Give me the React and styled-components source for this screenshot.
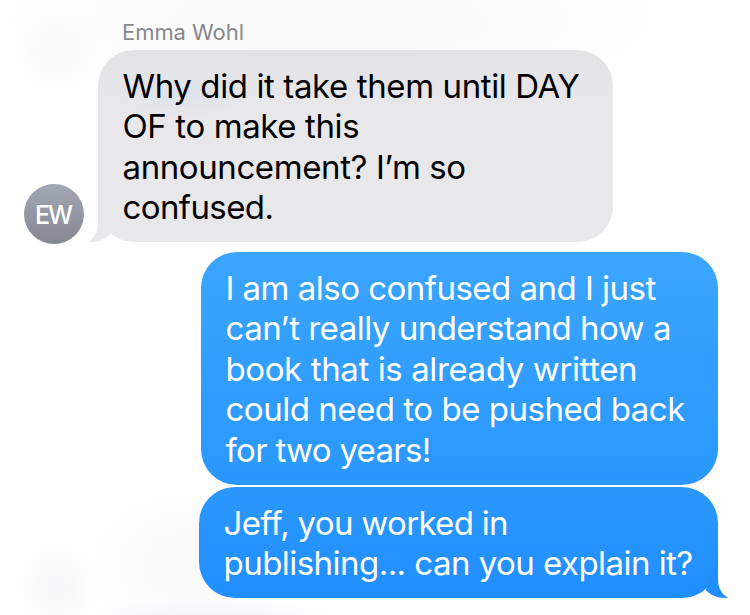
import React from "react";
import styled, { createGlobalStyle } from "styled-components";

// track: letter spacing of the line, in px
const incoming = [
  { text: "Why did it take them until DAY", track: -0.39 },
  { text: "OF to make this", track: -0.39 },
  { text: "announcement? I’m so", track: -0.4 },
  { text: "confused.", track: -0.6 },
];

const first = [
  { text: "I am also confused and I just", track: -0.52 },
  { text: "can’t really understand how a", track: -0.5 },
  { text: "book that is already written", track: -0.39 },
  { text: "could need to be pushed back", track: -0.48 },
  { text: "for two years!", track: -0.7 },
];

const second = [
  { text: "Jeff, you worked in", track: -0.68 },
  { text: "publishing... can you explain it?", track: -0.54 },
];

const Lines = ({ lines }) =>
  lines.map(({ text, track }) => (
    <Line key={text} $track={track}>
      {text}
    </Line>
  ));

const Tail = ({ flip, color }) => (
  <TailSvg $flip={flip} viewBox="0 0 24 40">
    <path
      fill={color}
      d="M13 0V22C13 30 17 37 23.5 39.6C15 41 6 38 .8 32Z"
    />
  </TailSvg>
);

const App = () => {
  return (
    <Page>
      <GlobalStyle />
      <Sender>Emma Wohl</Sender>
      <IncomingRow>
        <Avatar>EW</Avatar>
        <Received>
          <Lines lines={incoming} />
          <Tail flip color="#e8e8ea" />
        </Received>
      </IncomingRow>
      <Sent $width={517} $height={233} $from="#3ba5fe" $to="#2997fd">
        <Lines lines={first} />
      </Sent>
      <Sent $width={519} $height={111} $from="#2b98fd" $to="#208eff">
        <Lines lines={second} />
        <Tail color="#208eff" />
      </Sent>
    </Page>
  );
};

export default App;

const GlobalStyle = createGlobalStyle`
  body {
    margin: 0;
    background: #fefefe;
  }
`;

const Page = styled.main`
  box-sizing: border-box;
  display: flex;
  flex-direction: column;
  width: 750px;
  height: 615px;
  padding: 18px 32px 0 24px;
  overflow: hidden;
  font-family: Inter, "Liberation Sans", sans-serif;
  background:
    radial-gradient(ellipse 42px 45px at 56px 52px, #f9f9fa, transparent),
    radial-gradient(ellipse 42px 45px at 58px 586px, #f7f7f9, transparent),
    radial-gradient(ellipse 130px 20px at 210px 618px, #f0f5fb, transparent),
    radial-gradient(ellipse 110px 80px at 190px 565px, #f9f9fa, transparent),
    radial-gradient(ellipse 360px 90px at 330px 20px, #f9f9f9, transparent),
    #fefefe;
`;

const Sender = styled.p`
  margin: 0 0 4px 98px;
  align-self: flex-start;
  font-size: 22px;
  line-height: 28px;
  letter-spacing: -0.05px;
  color: #88888a;
`;

const IncomingRow = styled.div`
  display: flex;
  align-items: flex-end;
  gap: 14px;
  margin-bottom: 10px;
`;

const Avatar = styled.div`
  box-sizing: border-box;
  display: flex;
  align-items: center;
  justify-content: center;
  width: 60px;
  height: 60px;
  margin-bottom: -2px;
  padding: 2px 2px 0 0;
  border-radius: 50%;
  background: linear-gradient(#a2a7b5, #858893);
  color: #fff;
  font-size: 25px;
  font-weight: 500;
  letter-spacing: -2px;
`;

const Bubble = styled.div`
  position: relative;
  box-sizing: border-box;
  border-radius: 36px;
  padding: 15.6px 0 0 24.5px;
`;

const Received = styled(Bubble)`
  width: 515px;
  height: 192px;
  background:
    radial-gradient(ellipse 70px 28px at 85px 42px, #dde2eb, transparent),
    linear-gradient(#e3e3e5, #e8e8ea 60px);
  color: #000;
`;

const Sent = styled(Bubble)`
  flex-shrink: 0;
  align-self: flex-end;
  width: ${({ $width }) => $width}px;
  height: ${({ $height }) => $height}px;
  margin-bottom: 2px;
  background: linear-gradient(${({ $from, $to }) => `${$from}, ${$to}`});
  color: #fff;
`;

const Line = styled.p`
  margin: 0;
  font-size: 33px;
  line-height: 40.5px;
  letter-spacing: ${({ $track }) => $track}px;
  white-space: nowrap;
`;

const TailSvg = styled.svg`
  position: absolute;
  bottom: 0;
  width: 24px;
  height: 40px;
  ${({ $flip }) => ($flip ? "left: -11px; transform: scaleX(-1);" : "right: -11px;")}
`;
